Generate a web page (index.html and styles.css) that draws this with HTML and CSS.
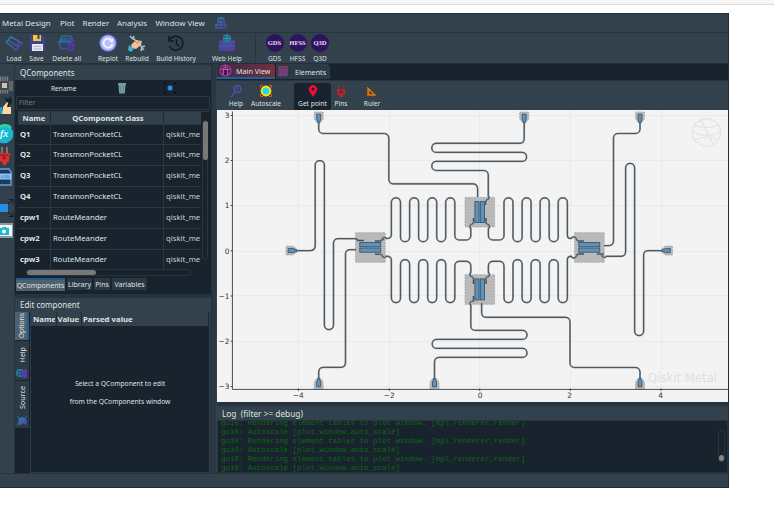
FILE: index.html
```html
<!DOCTYPE html>
<html lang="en">
<head>
<meta charset="utf-8">
<title>Qiskit Metal</title>
<link rel="stylesheet" href="styles.css">
</head>
<body>
<div class="page-rule"></div>
<div class="window">
  <nav class="menubar">
    <span>Metal Design</span><span>Plot</span><span>Render</span><span>Analysis</span><span>Window View</span>
    <svg class="menu-icon" viewBox="0 0 12 12"><path d="M3 7V3a3 2.500 0 0 1 6 0v4M1 11V8h10v3zM4 5h4M6 1v9" fill="none" stroke="url(#brand)" stroke-width="1.300"/></svg>
  </nav>

  <div class="toolbar">
    <div class="tool"><svg viewBox="0 0 18 18"><path d="M6 3l11 6-6 7L1 8zM1 8l5-5M3 6l9 6 2-5" fill="none" stroke="url(#brand)" stroke-width="1.500"/></svg><span>Load</span></div>
    <div class="tool"><svg viewBox="0 0 18 18"><path d="M2 1h12l3 3v13H2z" fill="#3e4590"/><path d="M5 1h8v6H5z" fill="#f5c53c"/><path d="M9.500 1h2v4h-2z" fill="#394079"/><path d="M4 10h11v7H4z" fill="#e7e9f6"/><path d="M5.500 12.500h8M5.500 15h8" stroke="#9aa3c4" stroke-width=".8"/></svg><span>Save</span></div>
    <div class="tool"><svg viewBox="0 0 18 18"><path d="M4 2h9l2 5H2zM1 8h12v7H3zM3 5h11" fill="#2b4763" stroke="url(#brand)" stroke-width="1.200"/><path d="M10 9h7l-1 8h-5z" fill="#54379f"/><path d="M13 11v4" stroke="#2d3557"/></svg><span>Delete all</span></div>
    <i></i>
    <div class="tool"><svg viewBox="0 0 18 18"><circle cx="9" cy="9" r="8.800" fill="#6870d8"/><circle cx="9" cy="9" r="7.500" fill="#b8bcff"/><path d="M12.700 6.500A4.500 4.500 0 1 0 13.500 10" fill="none" stroke="#f4f4ff" stroke-width="1.800"/><path d="M14 4v4h-4z" fill="#f4f4ff"/></svg><span>Replot</span></div>
    <div class="tool"><svg viewBox="0 0 18 18"><path d="M2 2l3 3 1-3M5 4l9 9M13 13l3 3M17 12l-3 1-1 4" fill="none" stroke="#9dc0c9" stroke-width="1.700"/><path d="M3 11l5-5 6 1-1 4-5 4-4-1z" fill="#f3c398"/><path d="M7 7l3 3M10 7l2 2" stroke="#9a6c55" stroke-width=".7"/><path d="M1 11l5 4-3 3-3-2z" fill="#35b4cc"/></svg><span>Rebuild</span></div>
    <div class="tool"><svg viewBox="0 0 18 18"><path d="M3 5.500A7 7 0 1 1 2.500 12M2 2v5h5M9.500 5v5l3 2" fill="none" stroke="#11181e" stroke-width="1.500"/></svg><span>Build History</span></div>
    <i></i>
    <div class="tool wide"><svg viewBox="0 0 20 20"><path d="M1 7h18v12H1z" fill="#553fa0"/><circle cx="10" cy="5" r="4.200" fill="#226a8a" stroke="#2089ac"/><path d="M6 5h8M10 1v8" stroke="#47a0b4" stroke-width=".7"/><path d="M2 8l8 5 8-5M1 14h18" fill="none" stroke="#3468a2"/></svg><span>Web Help</span></div>
    <i class="rule"></i>
    <div class="tool"><b class="badge">GDS</b><span>GDS</span></div>
    <div class="tool"><b class="badge">HFSS</b><span>HFSS</span></div>
    <div class="tool"><b class="badge">Q3D</b><span>Q3D</span></div>
  </div>

  <main class="body">
    <aside class="strip">
      <svg viewBox="0 0 15 18" height="18"><path d="M0 3h9M0 15h9" stroke="#7f868a" stroke-width="5" stroke-dasharray="1.300 1"/><path d="M9 6h4M9 8h4M9 10h4M9 12h4M9 14h4" stroke="#858b8e" stroke-width="1.200"/><path d="M0 5h9v9H0z" fill="#464846"/><path d="M2 7h5v5H2z" fill="#c9c5be"/></svg>
      <svg viewBox="0 0 15 18" height="18"><path d="M6 1l1 3 2 0 1-3 1 4-3 3-1 4" fill="none" stroke="#161f29" stroke-width="2"/><path d="M3 10l4-5 1 1-1 4h4v7H2z" fill="#ffd7a0"/><path d="M0 10h2v7H0z" fill="#1a9ed2"/></svg>
      <svg viewBox="0 0 15 20" height="20"><circle cx="4" cy="10" r="9.300" fill="#16b8cd"/><path d="M0 3a9 9 0 0 1 11 1" stroke="#31cfae" stroke-width="3" fill="none"/><text x="0" y="13" class="fx">fx</text></svg>
      <svg viewBox="0 0 15 18" height="18"><path d="M2 0v7M7 0v7" stroke="#74797d" stroke-width="2"/><path d="M-2 6h12v3H9v5l-3 2v2H3v-2l-3-2z" fill="#e12e2d"/><path d="M0 8h9M4 8v5M2 11h4" stroke="#80191e"/></svg>
      <svg viewBox="0 0 15 18" height="18"><path d="M0 1h9l2 3v13H0M11 12v5" fill="#203c55" stroke="#5ca4e4" stroke-width="1.400"/><path d="M-1 5.500h12.500v6H-1z" fill="#8cc4fa"/><text x="1" y="10" class="log-glyph">LOG</text></svg>
      <svg viewBox="0 0 15 22" height="22"><path d="M8 7l4-4M9 2.500h4v4M8 15l4 4M9 19.500h4v-4" fill="none" stroke="#11181e"/><path d="M0 7h8v8H0z" fill="#268bed"/></svg>
      <svg viewBox="0 0 15 18" height="18" class="camera"><path d="M0 1h13v15H0z" fill="#8c999e"/><path d="M0 3h12v11H0z" fill="#e9f8fa"/><path d="M0 6h2l1-1h3l1 1h2v7H0z" fill="#1dbad0"/><circle cx="4" cy="9.500" r="2" fill="#fff"/></svg>
    </aside>

    <section class="dock">
      <h2 class="dock-title">QComponents</h2>
      <div class="actions">
        <span>Rename</span>
        <svg viewBox="0 0 10 12"><path d="M1 1h8v2H1zM1.500 3h7l-.7 8.500H2.200z" fill="#719ba5"/><path d="M3.500 4v6M6.500 4v6" stroke="#56808b" stroke-width=".7"/></svg>
        <svg viewBox="0 0 12 12"><path d="M.5 2.500v-2h2M.5.500l3 3M9.500.500h2v2M11.500.500l-3 3M.5 9.500v2h2M.5 11.500l3-3M9.500 11.500h2v-2M11.500 11.500l-3-3" fill="none" stroke="#0b1016" stroke-width=".9"/><path d="M3.700 3.700h4.600v4.600H3.700z" fill="#268bed"/></svg>
      </div>
      <div class="filter">Filter</div>
      <div class="table-box">
        <div class="table">
          <div class="row head"><b>Name</b><b>QComponent class</b><b></b></div>
          <div class="row"><b>Q1</b><span>TransmonPocketCL</span><span>qiskit_me</span></div>
          <div class="row"><b>Q2</b><span>TransmonPocketCL</span><span>qiskit_me</span></div>
          <div class="row"><b>Q3</b><span>TransmonPocketCL</span><span>qiskit_me</span></div>
          <div class="row"><b>Q4</b><span>TransmonPocketCL</span><span>qiskit_me</span></div>
          <div class="row"><b>cpw1</b><span>RouteMeander</span><span>qiskit_me</span></div>
          <div class="row"><b>cpw2</b><span>RouteMeander</span><span>qiskit_me</span></div>
          <div class="row"><b>cpw3</b><span>RouteMeander</span><span>qiskit_me</span></div>
        </div>
        <div class="vscroll"><i></i></div>
      </div>
      <div class="hscroll"><i></i></div>
      <div class="tabs-bottom"><span class="on">QComponents</span><span>Library</span><span>Pins</span><span>Variables</span></div>
      <h2 class="dock-title edit">Edit component</h2>
      <div class="editor">
        <div class="vtabs">
          <div class="vtab on"><span>Options</span></div>
          <div class="vtab help"><span>Help</span><svg viewBox="0 0 12 12"><circle cx="4" cy="6" r="3.300" fill="none" stroke="#267da0" stroke-width="1.500"/><path d="M1 6h6M4 3v6" stroke="#267da0"/><path d="M6 7l2-5h2l1 3v6H6z" fill="#5a3ba6"/></svg></div>
          <div class="vtab source"><span>Source</span><svg viewBox="0 0 12 12"><path d="M3 3a5 4.500 0 0 1 7 1l1 4-2 2-2-2-2 2-3-1z" fill="url(#brand)"/><path d="M1 1l2 2M1 11l2-3M11 1L9 3M5 5h3" stroke="#2a6f98"/></svg></div>
        </div>
        <div class="pane">
          <div class="pane-head"><b><span>Name</span></b><b>Value</b><b>Parsed value</b></div>
          <p>Select a QComponent to edit</p>
          <p>from the QComponents window</p>
        </div>
      </div>
    </section>

    <section class="center">
      <div class="tabs-top">
        <div class="tab main"><svg viewBox="0 0 12 12"><circle cx="6" cy="6" r="5" fill="#3b1c55" stroke="#a33b91" stroke-width="1.200"/><path d="M4 10V5a2 2 0 0 1 4 0v5M2 5h8M6 1v3" fill="none" stroke="#c355a2"/></svg>Main View</div>
        <div class="tab elements"><svg viewBox="0 0 12 12"><path d="M1 1h10v10H1z" fill="#713154"/><path d="M1 4h10M1 6.500h10M1 9h10M4 4v7M7.500 4v7" stroke="#6355a8" stroke-width=".8"/><path d="M1 1.500h10" stroke="#aa404d"/></svg>Elements</div>
      </div>
      <div class="plotbar">
        <div class="tool"><svg viewBox="0 0 14 14"><circle cx="8.500" cy="5" r="3.500" fill="none" stroke="#435aaa" stroke-width="1.500"/><path d="M6 8l-4 5M8 3v3" stroke="#5e3ea9" stroke-width="1.800"/></svg><span>Help</span></div>
        <div class="tool"><svg viewBox="0 0 14 14"><path d="M1.500 4V1.500H4M10 1.500h2.500V4M1.500 10v2.500H4M10 12.500h2.500V10" fill="none" stroke="#dc4b32"/><circle cx="7" cy="7" r="4.400" fill="#27d8ed" stroke="#ffe100" stroke-width="2"/></svg><span>Autoscale</span></div>
        <div class="tool picked"><svg viewBox="0 0 14 14"><path d="M7 13L3.400 7.500a4.200 4.200 0 1 1 7.200 0z" fill="#f30c38"/><circle cx="7" cy="5" r="1.500" fill="#19232d"/></svg><span>Get point</span></div>
        <div class="tool"><svg viewBox="0 0 14 14"><path d="M4.500 1v5M9.500 1v5" stroke="#7c3135" stroke-width="1.500"/><path d="M3 5.500h8v5H9v2.500H5v-2.500H3z" fill="#b7262c"/><path d="M4 8h6M7 6v4" stroke="#5b171c" stroke-width=".8"/></svg><span>Pins</span></div>
        <div class="tool"><svg viewBox="0 0 14 14"><path d="M2 2l10 10H2zM4.500 7v3h3z" fill="#d77a0a" stroke="#65401c" stroke-width=".6" fill-rule="evenodd"/></svg><span>Ruler</span></div>
      </div>
      <svg class="plot" viewBox="217 110 511 292" id="plot">
        <path class="grid" d="M298.500 110v279M389.500 110v279M479.500 110v279M570.500 110v279M661.500 110v279M232 115.500h496M232 160.500h496M232 205.500h496M232 251.500h496M232 295.500h496M232 341.500h496M232 386.500h496"/>
        <g class="globe"><circle cx="706.500" cy="132.500" r="14"/><path d="M694 125q12 5 25 0M692.500 132q14 7 28 0M695 140q12-6 24 0M701 120l12 24M698 122q9-5 17 0"/></g>
        <text x="648" y="382" class="watermark">Qiskit Metal</text>
        <g id="qubits"></g>
        <g id="wires"></g>
        <g id="pads"></g>
        <path class="axis" d="M232.400 111.500v277.900H728M230.500 115.500h2M230.500 160.500h2M230.500 205.500h2M230.500 250.800h2M230.500 296h2M230.500 341.200h2M230.500 386.500h2M298.400 388.500v2.500M389.300 388.500v2.500M479.700 388.500v2.500M570.300 388.500v2.500M661 388.500v2.500"/>
        <g class="ticks end"><text x="229.500" y="118">3</text><text x="229.500" y="163.300">2</text><text x="229.500" y="208.300">1</text><text x="229.500" y="253.600">0</text><text x="229.500" y="298.800">−1</text><text x="229.500" y="344">−2</text><text x="229.500" y="389.300">−3</text></g>
        <g class="ticks mid"><text x="298.300" y="398">−4</text><text x="389.200" y="398">−2</text><text x="480" y="398">0</text><text x="569.500" y="398">2</text><text x="660.500" y="398">4</text></g>
      </svg>
      <h2 class="log-title">Log&nbsp; (filter &gt;= debug)</h2>
      <div class="log">
        <pre>gui0: Rendering element tables to plot window. [mpl_renderer.render]
gui0: Autoscale [plot_window.auto_scale]
gui0: Rendering element tables to plot window. [mpl_renderer.render]
gui0: Autoscale [plot_window.auto_scale]
gui0: Rendering element tables to plot window. [mpl_renderer.render]
gui0: Autoscale [plot_window.auto_scale]</pre>
        <div class="log-scroll"><i></i></div>
      </div>
    </section>
  </main>
  <footer class="status"></footer>
</div>
<svg width="0" height="0" class="defs"><defs><linearGradient id="brand" x1="0" y1="0" x2="1" y2="1"><stop offset="0" stop-color="#2188a5"/><stop offset="1" stop-color="#6036b0"/></linearGradient></defs></svg>
<script src="plot.js"></script>
</body>
</html>
```
FILE: styles.css
```css
* { box-sizing: border-box; }
body { margin: 0; background: #fff; font-family: "Noto Sans", "Open Sans", sans-serif; color: #dfe2e4; overflow: hidden; }
h2, p, pre { margin: 0; font-weight: 400; }
svg { display: block; flex: none; }
.defs { position: absolute; }
.page-rule { height: 5px; background: #f7f7f7; border-bottom: 1px solid #dcdcdc; margin-bottom: 8px; }
.window { width: 729px; height: 475px; background: #32414b; display: flex; flex-direction: column; border-top: 1px solid #24333e; border-right: 1px solid #1c2d3b; border-bottom: 1px solid #1c2d3b; overflow: hidden; white-space: nowrap; }

.menubar { height: 18px; display: grid; grid-template-columns: 58px 22.500px 34.500px 38.500px 59.500px 12px; padding-left: 2px; align-items: center; font-size: 7.900px; flex: none; }
.menu-icon { width: 12px; height: 12px; }

.toolbar { height: 32px; flex: none; border-top: 1px solid #26343e; border-bottom: 1px solid #22303b; display: grid; grid-template-columns: 22px 23px 37.500px 10.500px 24px 34px 44px 7px 44px 14px 23px 23px 22px; padding-left: 3px; }
.tool { display: flex; flex-direction: column; align-items: center; font-size: 6.600px; line-height: 9px; padding-top: 1px; }
.tool svg { width: 18px; height: 18px; margin-bottom: 1px; }
.tool.wide svg { width: 20px; }
.tool span { margin-top: 1px; }
.rule { border-left: 1px solid #25343f; margin-left: 6px; }
.badge { width: 18px; height: 18px; border-radius: 50%; background: #2d145f; color: #f0d8ee; font: bold 6.600px/18px "Liberation Serif", serif; text-align: center; display: flex; justify-content: center; margin-bottom: 1px; }

.body { flex: 1; display: flex; min-height: 0; }
.strip { width: 15px; overflow: hidden; padding-top: 12px; border-right: 1px solid #26343f; }
.strip svg { width: 15px; margin-bottom: 3px; }
.strip svg:nth-child(2) { margin-bottom: 9px; }
.strip svg:nth-child(5) { margin-bottom: 11px; }
.strip .camera { margin-top: 0; }
.fx { font: italic bold 10px "Liberation Serif", serif; fill: #e7ffff; }
.log-glyph { font: bold 4px "Liberation Sans", sans-serif; fill: #3579bd; }

.dock { width: 197px; background: #19232d; border-right: 1px solid #22303a; display: flex; flex-direction: column; }
.dock-title { height: 16px; flex: none; background: #32414b; border-top: 1px solid #25333e; font-size: 8px; line-height: 15px; padding-left: 5px; }
.actions { height: 16px; flex: none; display: grid; grid-template-columns: 98px 48px 12px; align-items: center; padding-left: 3px; font-size: 6.600px; }
.actions span { padding-left: 33px; }
.actions svg { height: 12px; width: 12px; }
.filter { height: 14px; flex: none; margin: 0 1px; border: 1px solid #2b3943; border-radius: 2px; font-size: 7px; line-height: 12px; padding-left: 2px; color: #737c83; }
.table-box { height: 158px; flex: none; display: flex; margin: 1px 2px 0 3px; border-top: 1px solid #2c3a44; }
.table { width: 183px; overflow: hidden; }
.row { display: grid; grid-template-columns: 33px 113px 37px; height: 20.850px; align-items: stretch; font-size: 7.700px; line-height: 19.500px; border-bottom: 1px solid #2b3943; }
.row > * { border-right: 1px solid #2b3943; padding-left: 2px; overflow: hidden; }
.row > *:last-child { border-right: 0; color: #c9cdd0; }
.row.head { height: 12.500px; line-height: 12px; background: #32414b; text-align: center; }
.row.head > * { border-color: #1f2c37; }
.row.head b:first-child { padding: 0; }
.vscroll { width: 6px; height: 140px; margin: 8px 0 0 1px; border: 1px solid #27343e; border-radius: 3px; }
.vscroll i { display: block; width: 5px; height: 39px; background: #787878; border-radius: 2.500px; margin-left: -.5px; }
.hscroll { height: 7px; width: 166px; flex: none; margin: 0 0 0 11px; border: 1px solid #27343e; border-radius: 3.500px; }
.hscroll i { display: block; width: 69px; height: 5px; background: #787878; border-radius: 2.500px; }
.tabs-bottom { height: 16px; flex: none; display: flex; gap: 2px; margin-top: 2px; padding-left: 1px; font-size: 7px; }
.tabs-bottom span { background: #2a3843; height: 12px; line-height: 13px; text-align: center; width: 25px; }
.tabs-bottom span:nth-child(3) { width: 16px; }
.tabs-bottom span:nth-child(4) { width: 35px; }
.tabs-bottom .on { background: #50606c; border-top: 2px solid #1c5c91; height: 13px; line-height: 12px; width: 49px; }
.dock-title.edit { height: 18px; border-top: 4px solid #26343f; box-shadow: inset 0 1px #32414b; line-height: 14px; }
.editor { flex: 1; min-height: 0; display: flex; }
.vtabs { width: 15px; display: flex; flex-direction: column; gap: 1px; }
.vtab { background: #2c3a45; width: 14px; display: flex; flex-direction: column; align-items: center; justify-content: space-between; }
.vtab span { writing-mode: vertical-rl; transform: rotate(180deg); font-size: 7.200px; line-height: 13px; }
.vtab svg { width: 12px; height: 12px; margin-bottom: 1px; }
.vtab.on { height: 28px; background: #50606c; border-right: 2px solid #1c6098; justify-content: center; }
.vtab.on span { font-size: 6.800px; }
.vtab.help { height: 39px; padding-top: 6px; }
.vtab.source { height: 47px; padding-top: 5px; }
.pane { flex: 1; border: 1px solid #2d3b46; border-width: 0 2px 1px 1px; text-align: center; font-size: 6.700px; }
.pane-head { height: 14px; display: grid; grid-template-columns: 25.500px 25.500px 1fr; background: #32414b; font-size: 7.800px; line-height: 14px; text-align: left; margin-bottom: 49px; }
.pane-head b { border-right: 1px solid #1f2c37; padding-left: 1px; overflow: hidden; }
.pane-head b:first-child { padding-left: 2px; }
.pane-head b span { display: block; overflow: hidden; width: 22px; }
.pane p { height: 18px; line-height: 18px; }

.center { width: 516px; background: #32414b; border-left: 4px solid #2a3843; display: flex; flex-direction: column; padding-left: 1px; }
.tabs-top { height: 16px; flex: none; display: flex; gap: 1px; background: #19232d; font-size: 7.200px; }
.tab { display: flex; align-items: center; height: 15px; }
.tab svg { width: 13px; height: 13px; margin: 0 4px 0 2px; }
.tab.main { width: 58px; background: linear-gradient(90deg, #342c49, #762e3b); border-bottom: 2px solid #1d6198; border-radius: 2px 2px 0 0; }
.tab.elements { width: 54px; background: #2c3a45; border-radius: 0 4px 0 0; }
.tab.elements svg { margin: 0 6px 0 1px; width: 12px; }
.plotbar { height: 30px; flex: none; display: grid; grid-template-columns: 25px 35px 10.500px 37px 20px 42px; padding: 2px 0 0 6.500px; border-top: 1px solid #26343f; }
.plotbar .tool { padding-top: 1px; }
.plotbar .tool svg { width: 14px; height: 14px; margin: 0; }
.plotbar .picked { background: #19232d; border-radius: 2px; grid-column: 4; }
.plot { width: 511px; height: 292px; background: #f3f3f3; }
.grid { fill: none; stroke: #e7e7e7; stroke-width: 1; stroke-dasharray: 1.500 .5; }
.globe { fill: none; stroke: #e3e3e3; stroke-width: 1.200; }
.watermark { font: 11.700px "DejaVu Sans", sans-serif; fill: #dfdfdf; }
.axis { fill: none; stroke: #4b4b4b; stroke-width: 1; }
.ticks { font: 7.400px "DejaVu Sans", sans-serif; fill: #333; }
.end { text-anchor: end; }
.mid { text-anchor: middle; }
.wire-edge { fill: none; stroke: #a3a8ab; stroke-width: 1.900; }
.wire { fill: none; stroke: #4c5963; stroke-width: 1.200; }
.pocket { fill: #b9b9b9; stroke: #a6a6a6; stroke-width: .8; stroke-dasharray: 2 1; }
.metal { fill: #5c92bb; stroke: #354c5f; stroke-width: .8; }
.claw { fill: none; stroke: #44525e; stroke-width: 1.500; }

.log-title { height: 18px; flex: none; border-top: 4px solid #26343f; box-shadow: inset 0 1px #32414b; font-size: 8.300px; line-height: 16px; padding-left: 5px; overflow: hidden; }
.log { flex: 1; min-height: 0; background: #19232d; overflow: hidden; display: flex; justify-content: space-between; border: 1px solid #26343f; }
.log pre { font: 7.460px/9px "Liberation Mono", monospace; color: #0b6813; padding-left: 3px; margin-top: -2px; }
.log-scroll { width: 7px; height: 32px; margin: 9px 2px 0 0; border: 1px solid #27343e; border-radius: 3px; display: flex; align-items: flex-end; }
.log-scroll i { width: 5px; height: 6px; border-radius: 3px; background: #858585; }
.status { height: 14px; flex: none; border-top: 1px solid #25333e; }
```
FILE: plot.js
```js
const NS = "http://www.w3.org/2000/svg";

function add(parent, tag, attrs) {
  const el = document.createElementNS(NS, tag);
  for (const k in attrs) el.setAttribute(k, attrs[k]);
  document.getElementById(parent).appendChild(el);
}

// Polyline with filleted corners; the radius shrinks on short segments.
function fillet(pts, radius) {
  let d = "M" + pts[0];
  for (let i = 1; i < pts.length - 1; i++) {
    const [p, c, n] = [pts[i - 1], pts[i], pts[i + 1]];
    const a = Math.hypot(p[0] - c[0], p[1] - c[1]);
    const b = Math.hypot(n[0] - c[0], n[1] - c[1]);
    const r = Math.min(radius, a / 2, b / 2);
    const s = [c[0] + (p[0] - c[0]) * r / a, c[1] + (p[1] - c[1]) * r / a];
    const e = [c[0] + (n[0] - c[0]) * r / b, c[1] + (n[1] - c[1]) * r / b];
    const cross = (c[0] - p[0]) * (n[1] - c[1]) - (c[1] - p[1]) * (n[0] - c[0]);
    d += "L" + s + "A" + r + " " + r + " 0 0 " + (cross > 0 ? 1 : 0) + " " + e;
  }
  return d + "L" + pts[pts.length - 1];
}

// Vertical switchback through the given columns.
function meander(xs, first, second) {
  const out = [];
  for (let i = 0; i < xs.length - 1; i++) {
    const y = i % 2 ? second : first;
    out.push([xs[i], y], [xs[i + 1], y]);
  }
  return out;
}

const left = [391.4, 400.5, 409.6, 418.6, 427.7, 436.7, 445.7, 454.8];
const right = [504, 513, 522.1, 531.1, 540.1, 549.2, 558.2, 567.4];

const wires = [
  [[318.7, 120], [318.7, 133.5], [388.8, 133.5], [388.8, 183.8], [477.6, 183.8], [477.6, 197]],
  [[295, 250.6], [315.2, 250.6], [315.2, 160.6], [324.4, 160.6], [324.4, 329.6], [333.5, 329.6], [333.5, 238.6], [356, 238.6]],
  [[318.7, 380], [318.7, 367.4], [345.5, 367.4], [345.5, 249.6], [356, 249.6]],
  [[524.2, 120], [524.2, 143.3], [431.8, 143.3], [431.8, 152.4], [526.6, 152.4], [526.6, 161.4], [431.8, 161.4], [431.8, 170.5], [488.3, 170.5], [488.3, 198], [485.8, 201]],
  [[640, 120], [640, 133.5], [613.5, 133.5], [613.5, 245.6], [604, 245.6]],
  [[600, 254], [604, 256.3], [625.6, 256.3], [625.6, 163.4], [634.6, 163.4], [634.6, 335.6], [643.6, 335.6], [643.6, 250.6], [664, 250.6]],
  [[640, 380], [640, 367.5], [570, 367.5], [570, 317.3], [481.6, 317.3], [481.6, 303]],
  [[434.5, 380], [434.5, 357.4], [527, 357.4], [527, 348.4], [432.2, 348.4], [432.2, 339.4], [527, 339.4], [527, 330.4], [470.8, 330.4], [470.8, 303], [473.5, 299.5]],
  [[380, 241], [384, 238.5], [391.4, 238.5], ...meander(left, 197.8, 241.7), [454.8, 240], [470.8, 240], [470.8, 226], [474, 222]],
  [[485.5, 222], [488.4, 226], [488.4, 240], [504, 240], ...meander(right, 197.8, 241.7), [567.4, 238.5], [574, 238.5], [579, 241]],
  [[380, 254], [384, 256.3], [391.4, 256.3], ...meander(left, 302.6, 259.7), [454.8, 261.3], [470.8, 261.3], [470.8, 275], [474, 279]],
  [[485.5, 279], [488.4, 275], [488.4, 261.3], [504, 261.3], ...meander(right, 302.6, 259.7), [567.4, 256.3], [574, 256.3], [579, 254]]
];

// cx, cy, rotated, claw polylines
const qubits = [
  [479.7, 212.1, true, "M473.500 218v6M486 218v6M485.500 205v-4"],
  [479.7, 289.4, true, "M473.500 278v6M486 278v6M473.500 296v6"],
  [370.3, 247.4, false, "M356 238.600l2 2h6M384 239l-3 2h-6M375 254.300h6"],
  [589.3, 247.4, false, "M577 241h7M577 254h7M597 254h7"]
];
for (const [cx, cy, tall, claws] of qubits) {
  add("qubits", "rect", { class: "pocket", x: cx - 14.7, y: cy - 14.7, width: 29.6, height: 29.6 });
  add("qubits", "path", { class: "claw", d: claws });
  for (const off of [-4.8, 0.6]) {
    const box = tall
      ? { x: cx + off, y: cy - 10.5, width: 4.2, height: 21 }
      : { x: cx - 10.5, y: cy + off, width: 21, height: 4.2 };
    add("qubits", "rect", { class: "metal", ...box });
  }
}

for (const pts of wires) {
  const d = fillet(pts, 4.5);
  add("wires", "path", { class: "wire-edge", d });
  add("wires", "path", { class: "wire", d });
}

// Launch pads: centre and heading in degrees (0 points down).
const pads = [
  [318.7, 117, 0], [524.2, 117, 0], [640, 117, 0],
  [318.7, 384, 180], [434.5, 384, 180], [640, 384, 180],
  [291, 250.6, 270], [667.5, 250.6, 90]
];
for (const [x, y, turn] of pads) {
  const transform = `translate(${x} ${y}) rotate(${turn})`;
  add("pads", "path", { class: "pocket", transform, d: "M-4.500-5h9v7l-3 4h-3l-3-4z" });
  add("pads", "path", { class: "metal", transform, d: "M-2-2.800h4v4.800L.6 6h-1.200L-2 2z" });
}
```
